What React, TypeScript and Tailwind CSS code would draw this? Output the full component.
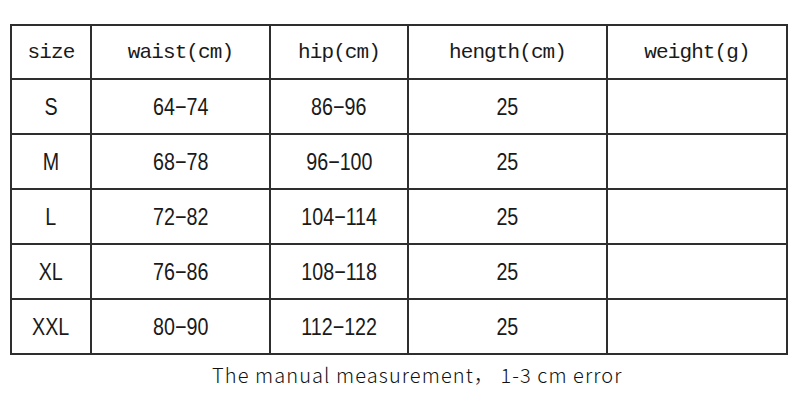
import React from "react";

const cols = ["w-[80px]", "w-[179px]", "w-[138px]", "w-[199px]", "w-[180px]"];

const headers = ["size", "waist(cm)", "hip(cm)", "hength(cm)", "weight(g)"];

const rows = [
  ["S", "64−74", "86−96", "25", ""],
  ["M", "68−78", "96−100", "25", ""],
  ["L", "72−82", "104−114", "25", ""],
  ["XL", "76−86", "108−118", "25", ""],
  ["XXL", "80−90", "112−122", "25", ""],
];

const App = () => {
  return (
    <div className="w-[800px] h-[402px] bg-white text-[#1a1a1a] overflow-hidden">
      {/* size table */}
      <div className="pt-[24px] pl-[10px]">
        <table className="border-collapse border-2 border-[#2e2e2e]">
          <thead>
            <tr className="h-[54px]">
              {headers.map((h, i) => (
                <th
                  key={h}
                  className={`${cols[i]} border-2 border-[#2e2e2e] p-0 pt-[2px] font-normal text-[21px] tracking-[-0.9px] font-['Liberation_Mono',monospace]`}
                >
                  {h}
                </th>
              ))}
            </tr>
          </thead>
          <tbody>
            {rows.map((r) => (
              <tr key={r[0]} className="h-[55px]">
                {r.map((c, i) => (
                  <td
                    key={i}
                    className="border-2 border-[#2e2e2e] p-0 text-center font-['Liberation_Sans',Arial,sans-serif] text-[24px]"
                  >
                    <span className="inline-block scale-x-[0.82]">{c}</span>
                  </td>
                ))}
              </tr>
            ))}
          </tbody>
        </table>
      </div>
      {/* note */}
      <div className="pt-[5px] pl-[212px] text-[20px] tracking-[1.1px] text-[#111] font-['Noto_Sans_CJK_SC','Noto_Sans',sans-serif] font-light">
        The manual measurement，&nbsp;1-3 cm error
      </div>
    </div>
  );
};

export default App;
